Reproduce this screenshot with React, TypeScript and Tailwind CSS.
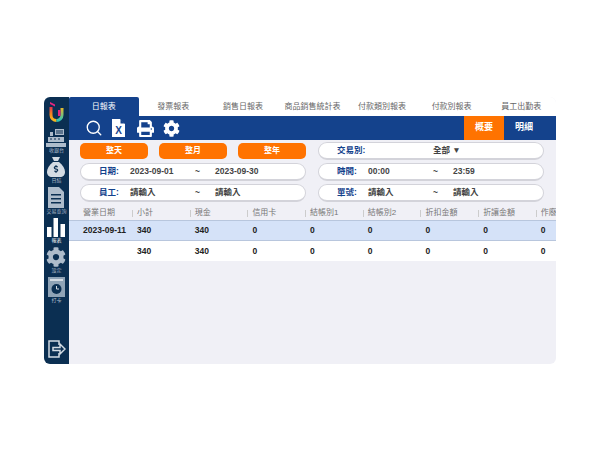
import { Search } from "lucide-react";
import { FaCog, FaPrint, FaDollarSign } from "react-icons/fa";

const font = { fontFamily: '"Liberation Sans", "Noto Sans CJK TC", sans-serif' };

const tabs = ["日報表", "發票報表", "銷售日報表", "商品銷售統計表", "付款類別報表", "付款別報表", "員工出勤表"];
const cols = ["營業日期", "小計", "現金", "信用卡", "結帳別1", "結帳別2", "折扣金額", "折讓金額", "作廢"];
const row1 = ["2023-09-11", "340", "340", "0", "0", "0", "0", "0", "0"];
const row2 = ["", "340", "340", "0", "0", "0", "0", "0", "0"];
const gridCols = "grid grid-cols-[63px_repeat(8,57.7px)] w-[530px]";

function Logo() {
  return (
    <svg width="15" height="21" viewBox="0 0 15 21" fill="none">
      <defs>
        <linearGradient id="lg" x1="0" y1="0" x2="0" y2="1">
          <stop offset="0" stopColor="#e8324f" />
          <stop offset="0.5" stopColor="#f58220" />
          <stop offset="1" stopColor="#f5b81f" />
        </linearGradient>
        <linearGradient id="lg2" x1="0" y1="0" x2="0" y2="1">
          <stop offset="0" stopColor="#e8ba2a" />
          <stop offset="1" stopColor="#2fc4b2" />
        </linearGradient>
      </defs>
      <path d="M2 6v8a5.500 5.500 0 0 0 5.500 5.500" stroke="url(#lg)" strokeWidth="3" />
      <path d="M13 7v7a5.500 5.500 0 0 1-5.500 5.500" stroke="url(#lg2)" strokeWidth="3" />
      <path d="M1 1l5 2.500v2L1 3z" fill="#e5267f" />
      <path d="M9 9h2.500v6H9z" fill="#e5267f" />
    </svg>
  );
}

function Pos() {
  return (
    <svg width="20" height="18" viewBox="0 0 20 18" fill="#aebccb">
      <path d="M9 0h9v6H9z" />
      <path d="M4 3h3v4H4z" />
      <path d="M2 8h16v5H2z" />
      <path d="M0 14h20v4H0z" />
      <path d="M10 1.500h7v1h-7zM10 3.500h7v1h-7z" fill="#0b2f52" />
      <path d="M4 9.500h2v1H4zM8 9.500h2v1H8zM12 9.500h2v1h-2z" fill="#0b2f52" />
    </svg>
  );
}

function Bag() {
  return (
    <div className="relative w-[18px] h-[20px]">
      <svg width="18" height="20" viewBox="0 0 18 20" fill="#d3dbe3">
        <path d="M5 0h8l-2 4H7z" />
        <path d="M6 5h6c4 3 6 7 6 10 0 3-2 5-5 5H5c-3 0-5-2-5-5 0-3 2-7 6-10z" />
      </svg>
      <FaDollarSign className="absolute left-[5px] top-[8px] text-[8px] text-[#0b2f52]" />
    </div>
  );
}

function Doc() {
  return (
    <svg width="16" height="21" viewBox="0 0 16 21" fill="#aebccb">
      <path d="M0 0h11l5 5v16H0z" />
      <path d="M3 7h10v1.500H3zM3 11h10v1.500H3zM3 15h10v1.500H3z" fill="#0b2f52" />
    </svg>
  );
}

function Bars() {
  return (
    <svg width="18" height="19" viewBox="0 0 18 19" fill="#ffffff">
      <path d="M0 9h4.500v10H0zM6.500 0H11v19H6.500zM13.500 6H18v13h-4.500z" />
    </svg>
  );
}

function Clock() {
  return (
    <svg width="17" height="20" viewBox="0 0 17 20">
      <path d="M0 0h17v20H0z" fill="#8fa3b6" />
      <path d="M2 2h13v2H2z" fill="#d3dbe3" />
      <circle cx="8.500" cy="12" r="5" fill="#0b2f52" />
      <path d="M8.500 9v3h2.500" stroke="#d3dbe3" strokeWidth="1" fill="none" />
    </svg>
  );
}

function Exit() {
  return (
    <svg width="18" height="18" viewBox="0 0 18 18" fill="none" stroke="#d3dbe3" strokeWidth="1.500">
      <path d="M11 5V1H1v16h10v-4" />
      <path d="M5 7.500h7V4l5 5-5 5v-3.500H5z" />
    </svg>
  );
}

function FileX() {
  return (
    <div className="relative w-[13px] h-[18px]">
      <svg width="13" height="18" viewBox="0 0 13 18" fill="#ffffff">
        <path d="M0 0h8l5 5v13H0z" />
        <path d="M8.500 0L13 4.500H8.500z" fill="#14428c" />
      </svg>
      <span className="absolute inset-x-0 top-[6px] text-center text-[10px] leading-[11px] font-bold text-[#14428c]">X</span>
    </div>
  );
}

function SideItem({ icon, label, white }: { icon: React.ReactNode; label: string; white?: boolean }) {
  return (
    <div className="flex flex-col items-center">
      {icon}
      <span className={`text-[5px] leading-[7px] whitespace-nowrap ${white ? "text-white" : "text-[#aebccb]"}`}>{label}</span>
    </div>
  );
}

function OrangeBtn({ label }: { label: string }) {
  return (
    <div className="w-[68px] h-[16px] rounded-[5px] bg-[#ff7300] text-white text-[8px] font-bold flex items-center justify-center">{label}</div>
  );
}

function Pill({ label, a, b, tilde = true }: { label: string; a: string; b?: string; tilde?: boolean }) {
  return (
    <div className="h-[18px] rounded-full bg-white border border-[#d3d3da] border-b-2 flex items-center text-[8.500px] font-semibold text-[#444] w-[226px] relative">
      <span className="w-[31px] ml-[18px] text-[#14428c] font-bold">{label}</span>
      <span className="w-[65px] whitespace-nowrap">{a}</span>
      {tilde ? <span className="w-[20px]">~</span> : null}
      {b ? <span className="whitespace-nowrap">{b}</span> : null}
    </div>
  );
}

export default function App() {
  return (
    <div className="w-[600px] h-[460px] bg-white pt-[97px] pl-[44px] overflow-hidden" style={font}>
      <div className="flex w-[512px] h-[267px] rounded-[6px] overflow-hidden">
        <aside className="w-[25px] shrink-0 bg-[#0b2f52] flex flex-col items-center pt-[4px] pb-[6px]">
          <Logo />
          <div className="flex flex-col items-center gap-[3px] mt-[7px]">
            <SideItem icon={<Pos />} label="收銀台" />
            <SideItem icon={<Bag />} label="日結" />
            <SideItem icon={<Doc />} label="交易查詢" />
            <SideItem icon={<Bars />} label="報表" white />
            <SideItem icon={<FaCog className="text-[#aebccb] text-[20px]" />} label="設定" />
            <SideItem icon={<Clock />} label="打卡" />
          </div>
          <div className="mt-auto">
            <Exit />
          </div>
        </aside>
        <main className="flex-1 min-w-0 bg-[#f0f0f6] flex flex-col">
          <div className="grid grid-cols-7 h-[19px] bg-white text-[8px] text-[#666]">
            {tabs.map((t, i) => (
              <div key={t} className={`flex items-center justify-center whitespace-nowrap ${i === 0 ? "bg-[#14428c] text-white rounded-t-[2px]" : ""}`}>{t}</div>
            ))}
          </div>
          <div className="h-[24px] bg-[#14428c] flex items-center pl-[16px] text-white">
            <Search size={18} strokeWidth={1.8} />
            <div className="ml-[9px]"><FileX /></div>
            <FaPrint className="ml-[12px] text-[17px]" />
            <FaCog className="ml-[9px] text-[17px]" />
            <div className="ml-auto flex h-full text-[9px] font-bold">
              <div className="w-[40px] bg-[#ff7300] flex items-center justify-center">概要</div>
              <div className="w-[40px] mr-[12px] flex items-center justify-center">明細</div>
            </div>
          </div>
          <div className="grid grid-cols-[226px_226px] gap-x-[12px] gap-y-[3px] pl-[11px] pt-[2px]">
            <div className="flex gap-[11px] pt-[1px]">
              <OrangeBtn label="整天" />
              <OrangeBtn label="整月" />
              <OrangeBtn label="整年" />
            </div>
            <Pill label="交易別:" a="" tilde={false} b="全部 ▼" />
            <Pill label="日期:" a="2023-09-01" b="2023-09-30" />
            <Pill label="時間:" a="00:00" b="23:59" />
            <Pill label="員工:" a="請輸入" b="請輸入" />
            <Pill label="單號:" a="請輸入" b="請輸入" />
          </div>
          <div className="mt-[3px] overflow-hidden">
            <div className={`${gridCols} h-[15px] text-[8px] text-[#777] items-center`}>
              {cols.map((c, i) => (
                <div key={c} className={`whitespace-nowrap ${i === 0 ? "pl-[14px]" : "pl-[5px] relative before:absolute before:left-0 before:top-[3px] before:h-[7px] before:w-px before:bg-[#ccc]"}`}>{c}</div>
              ))}
            </div>
            <div className={`${gridCols} h-[21px] bg-[#d5e2f8] border-t border-b border-[#b8c6dd] text-[8.500px] font-semibold text-[#222] items-center`}>
              {row1.map((c, i) => (
                <div key={i} className={`whitespace-nowrap ${i === 0 ? "pl-[14px]" : "pl-[5px]"}`}>{c}</div>
              ))}
            </div>
            <div className={`${gridCols} h-[20px] bg-white text-[8.500px] font-semibold text-[#222] items-center`}>
              {row2.map((c, i) => (
                <div key={i} className={`whitespace-nowrap ${i === 0 ? "pl-[14px]" : "pl-[5px]"}`}>{c}</div>
              ))}
            </div>
          </div>
        </main>
      </div>
    </div>
  );
}
